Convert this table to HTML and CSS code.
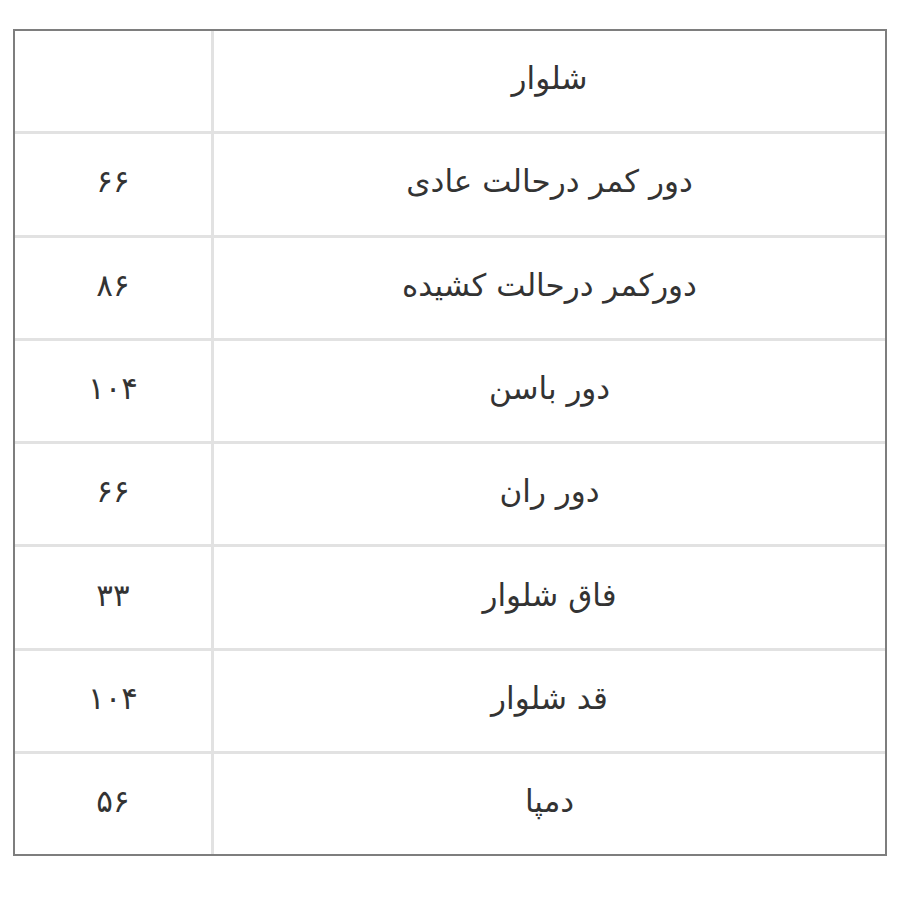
FILE: index.html
```html
<!DOCTYPE html>
<html lang="fa" dir="rtl">
<head>
<meta charset="utf-8">
<link rel="stylesheet" href="styles.css">
</head>
<body>
<div class="frame">
<table class="size-table">
  <tr><td class="label">شلوار</td><td class="value"></td></tr>
  <tr><td class="label">دور کمر درحالت عادی</td><td class="value">۶۶</td></tr>
  <tr><td class="label">دورکمر درحالت کشیده</td><td class="value">۸۶</td></tr>
  <tr><td class="label">دور باسن</td><td class="value">۱۰۴</td></tr>
  <tr><td class="label">دور ران</td><td class="value">۶۶</td></tr>
  <tr><td class="label">فاق شلوار</td><td class="value">۳۳</td></tr>
  <tr><td class="label">قد شلوار</td><td class="value">۱۰۴</td></tr>
  <tr><td class="label">دمپا</td><td class="value">۵۶</td></tr>
</table>
</div>
</body>
</html>
```
FILE: styles.css
```css
html, body {
  margin: 0;
  background: #ffffff;
}
body {
  padding: 29px 13px;
  font-family: "DejaVu Sans", "Noto Sans", sans-serif;
  color: #333333;
}
.frame {
  width: 870px;
  border: 2px solid #7e7e7e;
}
.size-table {
  width: 100%;
  border-collapse: collapse;
  direction: rtl;
}
.size-table td {
  height: 94.3px;
  padding: 0 0 6px;
  border: 3px solid #e2e2e2;
  text-align: center;
  vertical-align: middle;
  font-size: 31px;
}
.size-table tr:first-child td { border-top: none; }
.size-table tr:last-child td { border-bottom: none; }
.size-table td.label { border-right: none; }
.size-table td.value {
  width: 196px;
  border-left: none;
}
```
